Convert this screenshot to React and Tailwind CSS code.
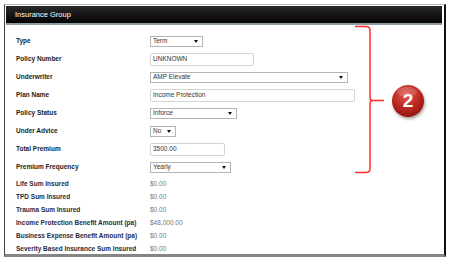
import React from "react";

const font = { fontFamily: '"Liberation Sans", Arial, sans-serif' };

function Sel({ w, value }) {
  return (
    <div
      className={`flex h-[11px] items-center justify-between border border-[#b5b5b5] bg-white pl-[2px] pr-[4px] text-[6.5px] leading-none text-[#333]`}
      style={{ width: w }}
    >
      <span>{value}</span>
      <span className="h-0 w-0 border-x-[2.5px] border-t-[3px] border-x-transparent border-t-[#111]" />
    </div>
  );
}

function Inp({ w, value }) {
  return (
    <div
      className="flex h-[13px] items-center rounded-[2px] border border-[#d4d4d4] bg-white pl-[2px] text-[6.5px] leading-none text-[#333]"
      style={{ width: w }}
    >
      {value}
    </div>
  );
}

const editRows = [
  ["Type", <Sel w={53} value="Term" />],
  ["Policy Number", <Inp w={104} value="UNKNOWN" />],
  ["Underwriter", <Sel w={198} value="AMP Elevate" />],
  ["Plan Name", <Inp w={205} value="Income Protection" />],
  ["Policy Status", <Sel w={87} value="Inforce" />],
  ["Under Advice", <Sel w={26} value="No" />],
  ["Total Premium", <Inp w={75} value="3500.00" />],
  ["Premium Frequency", <Sel w={81} value="Yearly" />],
];

const readRows = [
  ["Life Sum Insured", "$0.00"],
  ["TPD Sum Insured", "$0.00"],
  ["Trauma Sum Insured", "$0.00"],
  ["Income Protection Benefit Amount (pa)", "$48,000.00"],
  ["Business Expense Benefit Amount (pa)", "$0.00"],
  ["Severity Based Insurance Sum Insured", "$0.00"],
];

export default function App() {
  return (
    <div className="h-[261px] w-[454px] bg-white pl-[4px] pt-[4px]" style={font}>
      <div className="relative h-[253px] w-[442px] border-t border-l border-r-2 border-b-[3px] border-t-[#b8b8b8] border-l-[#444] border-r-[#111] border-b-[#858585] bg-white">
        <div className="px-[1px] pt-[1px] pr-[2px]">
          <div className="flex h-[17px] items-center bg-gradient-to-b from-[#2a2a2a] to-[#050505] pl-[9px] text-[7.5px] text-white">
            Insurance Group
          </div>
          <div className="h-[2px] bg-[#8d9ca2]" />
        </div>
        <div className="pl-[11px] pt-[7px]">
          {editRows.map(([label, ctrl]) => (
            <div key={label} className="flex h-[18px] items-center">
              <div className="w-[134px] text-[6.5px] font-bold text-[#1c1c1c]">{label}</div>
              {ctrl}
            </div>
          ))}
          <div className="h-[1px]" />
          {readRows.map(([label, v]) => (
            <div key={label} className="flex h-[13px] items-center">
              <div className="w-[134px] whitespace-nowrap text-[6.5px] font-bold text-[#2a2a3a]">{label}</div>
              <div className="text-[6.5px] text-[#777]">{v}</div>
            </div>
          ))}
        </div>

        <svg
          className="absolute left-[-5px] top-[-5px]"
          width="454"
          height="261"
          viewBox="0 0 454 261"
        >
          <path
            d="M355 26.5 H366 Q370 26.5 370 30.5 V97 Q370 100.5 373 100.5 H384 M373 100.5 Q370 100.5 370 104 V168.5 Q370 172.5 366 172.5 H355"
            fill="none"
            stroke="#ff2a2a"
            strokeWidth="1.5"
          />
          <defs>
            <radialGradient id="g" cx="0.45" cy="0.3" r="0.75">
              <stop offset="0" stopColor="#e05a4e" />
              <stop offset="0.6" stopColor="#b8261f" />
              <stop offset="1" stopColor="#8a1612" />
            </radialGradient>
            <filter id="s" x="-30%" y="-30%" width="160%" height="160%">
              <feDropShadow dx="1" dy="2" stdDeviation="1.5" floodColor="#000" floodOpacity="0.35" />
            </filter>
          </defs>
          <circle cx="408" cy="101" r="16" fill="url(#g)" filter="url(#s)" />
          <ellipse cx="407" cy="92" rx="10" ry="5" fill="#fff" opacity="0.15" />
        </svg>
        <div className="absolute left-[387px] top-[80px] flex h-[32px] w-[32px] items-center justify-center text-[19px] font-bold text-white">
          2
        </div>
      </div>
    </div>
  );
}
